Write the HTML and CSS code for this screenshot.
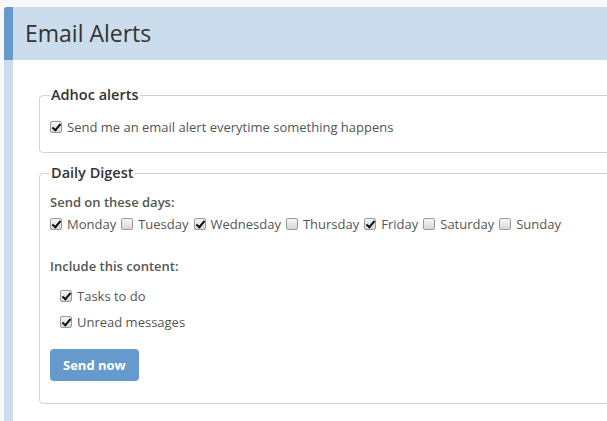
FILE: index.html
```html
<!DOCTYPE html>
<html lang="en">
<head>
  <meta charset="UTF-8" />
  <title>Email Alerts</title>
  <link rel="stylesheet" href="styles.css">
</head>
<body>
  <div class="panel">
    <header class="panel-head">
      <h1>Email Alerts</h1>
    </header>
    <div class="panel-body">
      <fieldset>
        <legend>Adhoc alerts</legend>
        <label class="check"><input type="checkbox" checked> Send me an email alert everytime something happens</label>
      </fieldset>

      <fieldset class="digest">
        <legend>Daily Digest</legend>
        <div class="field-label">Send on these days:</div>
        <div class="days">
          <label class="check"><input type="checkbox" checked> Monday</label>
          <label class="check"><input type="checkbox"> Tuesday</label>
          <label class="check"><input type="checkbox" checked> Wednesday</label>
          <label class="check"><input type="checkbox"> Thursday</label>
          <label class="check"><input type="checkbox" checked> Friday</label>
          <label class="check"><input type="checkbox"> Saturday</label>
          <label class="check"><input type="checkbox"> Sunday</label>
        </div>
        <div class="field-label content-label">Include this content:</div>
        <div class="content-list">
          <label class="check"><input type="checkbox" checked> Tasks to do</label>
          <label class="check"><input type="checkbox" checked> Unread messages</label>
        </div>
        <button class="btn">Send now</button>
      </fieldset>
    </div>
  </div>
</body>
</html>
```

FILE: styles.css
```css
* {
  box-sizing: border-box;
}
body {
  margin: 0;
  background: #f8f8f8;
  font-family: 'Open Sans', sans-serif;
  font-size: 13px;
  color: #555;
  overflow: hidden;
}
.panel {
  margin: 7px 0 0 4px;
  width: 720px;
  background: #fff;
  border-left: 9px solid #cbdcec;
  border-top-left-radius: 3px;
}
.panel-head {
  margin-left: -9px;
  border-left: 9px solid #6699cc;
  border-top-left-radius: 3px;
  background: #cbdcec;
  height: 53px;
  display: flex;
  align-items: center;
  padding-left: 12px;
}
.panel-head h1 {
  margin: 0;
  font-size: 23px;
  font-weight: 400;
  color: #333;
  line-height: 30px;
  padding-bottom: 1px;
}
.panel-body {
  padding: 25px 0 30px 26px;
}
fieldset {
  margin: 0 0 10px;
  padding: 12px 10px 15px;
  border: 1px solid #d4d0e2;
  border-radius: 4px;
}
legend {
  padding: 0 1px;
  font-size: 14.5px;
  font-weight: 600;
  line-height: 20px;
  color: #333;
}
.check {
  display: inline-flex;
  align-items: center;
  gap: 5px;
  line-height: 20px;
}
.check input {
  appearance: none;
  -webkit-appearance: none;
  margin: 0;
  width: 12px;
  height: 12px;
  border: 1px solid #999;
  border-radius: 2px;
  background: linear-gradient(#f6f6f6, #d8d8d8);
  position: relative;
}
.check input:checked::after {
  content: '';
  position: absolute;
  left: 3px;
  top: 0;
  width: 3px;
  height: 7px;
  border: solid #111;
  border-width: 0 2px 2px 0;
  transform: rotate(40deg);
}
.digest {
  padding-top: 9px;
  padding-bottom: 22px;
}
.field-label {
  font-weight: 600;
  line-height: 20px;
}
.days {
  display: flex;
  gap: 5px;
  height: 24px;
  align-items: center;
}
.content-label {
  margin-top: 20px;
}
.content-list {
  display: flex;
  flex-direction: column;
  align-items: flex-start;
  gap: 6px;
  margin: 10px 0 0 10px;
}
.btn {
  margin-top: 17px;
  height: 32px;
  padding: 0 13px;
  background: #6699cc;
  color: #fff;
  border: none;
  border-radius: 4px;
  font-family: 'Open Sans', sans-serif;
  font-size: 13px;
  font-weight: 700;
  cursor: pointer;
}
```
